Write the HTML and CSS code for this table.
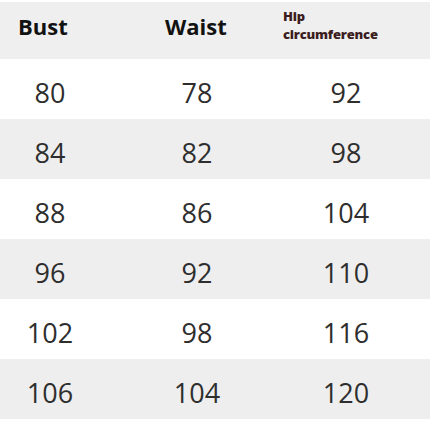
FILE: index.html
```html
<!DOCTYPE html>
<html>
<head>
<meta charset="utf-8">
<link rel="stylesheet" href="styles.css">
</head>
<body>
<div class="table">
  <div class="head">
    <div class="h h-bust">Bust</div>
    <div class="h h-waist">Waist</div>
    <div class="h-hip"><span>Hip</span><span>circumference</span></div>
  </div>
  <div class="row"><div>80</div><div>78</div><div>92</div></div>
  <div class="row alt"><div>84</div><div>82</div><div>98</div></div>
  <div class="row"><div>88</div><div>86</div><div>104</div></div>
  <div class="row alt"><div>96</div><div>92</div><div>110</div></div>
  <div class="row"><div>102</div><div>98</div><div>116</div></div>
  <div class="row alt"><div>106</div><div>104</div><div>120</div></div>
</div>
</body>
</html>
```

FILE: styles.css
```css
html, body {
  margin: 0;
  padding: 0;
  background: #ffffff;
}
.table {
  width: 430px;
  height: 430px;
  padding-top: 2px;
  box-sizing: border-box;
  font-family: "Open Sans", "Noto Sans", sans-serif;
}
.head {
  height: 57px;
  background: #efefef;
  display: grid;
  grid-template-columns: 165px 118px 1fr;
  align-items: start;
}
.h {
  font-weight: 700;
  font-size: 22px;
  color: #121212;
  line-height: 30px;
  padding-top: 9px;
}
.h-bust {
  padding-left: 18px;
}
.h-hip {
  display: flex;
  flex-direction: column;
  padding-top: 5px;
  font-weight: 800;
  font-size: 13px;
  line-height: 18px;
  color: #3b1d1d;
  letter-spacing: -0.2px;
}
.row {
  height: 60px;
  display: grid;
  grid-template-columns: 100px 194px 104px;
  align-items: center;
  background: #ffffff;
  font-size: 27px;
  color: #2e2e2e;
}
.row div {
  text-align: center;
  padding-top: 7px;
}
.row.alt {
  background: #eeeeee;
}
```
